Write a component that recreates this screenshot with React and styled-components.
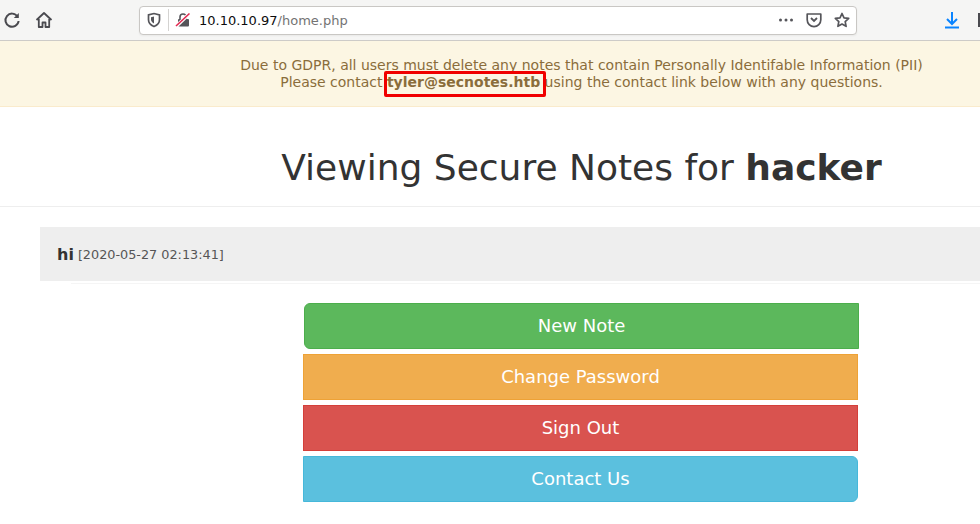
import React from "react";
import styled, { createGlobalStyle } from "styled-components";

const Global = createGlobalStyle`
  html, body { margin: 0; padding: 0; background: #fff; }
  body { font-family: "DejaVu Sans", sans-serif; width: 980px; height: 524px; overflow: hidden; }
`;
const Toolbar = styled.div`
  height: 40px; background: #f5f5f4; border-bottom: 1px solid #cdcbc8;
  display: flex; align-items: center; position: relative; overflow: hidden;
`;
const NavIcon = styled.svg`
  width: 18px; height: 18px; flex: none; color: #4a4a4f; margin-left: ${p => p.$ml}px;
`;
const UrlBar = styled.div`
  margin-left: 86px; width: 718px; flex: none; height: 29px; box-sizing: border-box; background: #fff;
  border: 1px solid #c9c7c4; border-radius: 4px; display: flex; align-items: center;
  box-shadow: 0 1px 2px rgba(0,0,0,.05);
`;
const BarIcon = styled.svg`
  flex: none; width: ${p => p.$w || 16}px; height: 16px; margin-left: ${p => p.$ml}px; color: #55555a;
`;
const Sep = styled.div`width: 1px; height: 22px; background: #d4d3d1; margin-left: 6px;`;
const Url = styled.div`
  font-size: 13px; margin-left: 8px; color: #0c0c0d; flex: 1; white-space: nowrap;
  span { color: #737373; }
`;
const Banner = styled.div`
  height: 66px; box-sizing: border-box; background: #fcf6e3; border-bottom: 1px solid #faebcc;
  padding: 16px 0 0 183px; color: #8a6d3b; font-size: 14px; line-height: 17px; text-align: center;
  position: relative;
  b { font-weight: 700; }
`;
const Highlight = styled.div`
  position: absolute; left: 384px; top: 30px; width: 162px; height: 26px; box-sizing: border-box;
  border: 3px solid #f00000; border-radius: 2px;
`;
const Header = styled.div`
  height: 100px; box-sizing: border-box; border-bottom: 1px solid #eee; padding: 39px 0 0 183px;
  text-align: center; font-size: 36px; line-height: 44px; color: #333;
  b { font-weight: 700; }
`;
const NoteWrap = styled.div`
  margin-top: 20px; margin-left: 40px;
`;
const Note = styled.div`
  height: 54px; box-sizing: border-box; background: #eee; padding-left: 18px;
  display: flex; align-items: center; gap: 4px; color: #333;
`;
const NoteTitle = styled.span`font-size: 16px; font-weight: 700; margin-left: -1px;`;
const NoteDate = styled.span`font-size: 12.8px; color: #555; padding-top: 1px;`;
const Rule = styled.div`
  margin: 2px 0 0 31px; height: 1px; background: #f5f5f5;
`;
const Buttons = styled.div`
  margin: 19px 0 0 303px; width: 556px; display: flex; flex-direction: column; gap: 5px;
`;
const Btn = styled.button`
  height: 46px; box-sizing: border-box; padding: 0; font: 18px/1 "DejaVu Sans", sans-serif; color: #fff;
  background: ${p => p.$bg}; border: 1px solid ${p => p.$bd};
  border-radius: ${p => p.$radius};
  margin-left: ${p => p.$ml || 0}px; margin-right: ${p => p.$mr || 0}px;
`;

export default function App() {
  return (
    <>
      <Global />
      <Toolbar>
        <NavIcon $ml={3} viewBox="0 0 18 18" fill="none" stroke="currentColor" strokeWidth="2">
          <path d="M14.5 5.5A6.6 6.6 0 1 0 15.6 10" />
          <path d="M15.8 2v5h-5z" fill="currentColor" stroke="none" />
        </NavIcon>
        <NavIcon $ml={14} viewBox="0 0 18 18" fill="none" stroke="currentColor" strokeWidth="1.8" strokeLinejoin="round">
          <path d="M1.500 9 9 2l7.500 7" />
          <path d="M3.800 8v8h3.700v-4.500h3V16h3.700V8" />
        </NavIcon>
        <UrlBar>
          <BarIcon $ml={6} viewBox="0 0 16 16" fill="none" stroke="currentColor" strokeWidth="1.700">
            <path d="M2.500 2.800 8 1.500l5.500 1.300v5c0 3.200-2.300 5.500-5.500 6.700C4.800 13.300 2.500 11 2.500 7.800z" />
            <path d="M8 4.500 5 5.300v2.500c0 1.500 1.200 2.800 3 3.600z" fill="currentColor" stroke="none" />
          </BarIcon>
          <Sep />
          <BarIcon $ml={6} viewBox="0 0 16 16">
            <path d="M5 7V5a3 3 0 0 1 6 0v2" fill="none" stroke="#55555a" strokeWidth="1.600" />
            <rect x="3" y="7" width="11" height="7.500" rx="1" fill="#55555a" />
            <path d="M1 14.500 14.500 1.500" stroke="#fff" strokeWidth="3.500" />
            <path d="M1 14 14.500 1.500" stroke="#e22850" strokeWidth="1.600" />
          </BarIcon>
          <Url>10.10.10.97<span>/home.php</span></Url>
          <BarIcon $w={16} viewBox="0 0 16 16" fill="currentColor">
            <circle cx="2.500" cy="8" r="1.500" /><circle cx="8" cy="8" r="1.500" /><circle cx="13.500" cy="8" r="1.500" />
          </BarIcon>
          <BarIcon $ml={12} viewBox="0 0 16 16" fill="none" stroke="currentColor" strokeWidth="1.700">
            <path d="M1.200 2h13.600v5.800a6.800 6.800 0 0 1-13.600 0z" strokeLinejoin="round" />
            <path d="m5 6 3 3 3-3" strokeWidth="1.800" />
          </BarIcon>
          <BarIcon $ml={12} viewBox="0 0 16 16" fill="none" stroke="currentColor" strokeWidth="1.700" style={{ marginRight: 6 }}>
            <path d="m8 1.500 2 4.300 4.700.6-3.500 3.200.9 4.700L8 12l-4.100 2.300.9-4.700L1.300 6.400 6 5.800z" strokeLinejoin="round" />
          </BarIcon>
        </UrlBar>
        <NavIcon $ml={86} viewBox="0 0 18 18" fill="none" stroke="#0a84ff" strokeWidth="2">
          <path d="M9 1v11M4 8l5 5 5-5" />
          <path d="M2 16.500h14" />
        </NavIcon>
        <NavIcon $ml={16} viewBox="0 0 18 18" fill="none" stroke="#4a4a4f" strokeWidth="2">
          <path d="M2 2v14" />
        </NavIcon>
      </Toolbar>
      <Banner>
        Due to GDPR, all users must delete any notes that contain Personally Identifable Information (PII)<br />
        Please contact <b>tyler@secnotes.htb</b> using the contact link below with any questions.
        <Highlight />
      </Banner>
      <Header>Viewing Secure Notes for <b>hacker</b></Header>
      <NoteWrap>
        <Note>
          <NoteTitle>hi</NoteTitle>
          <NoteDate>[2020-05-27 02:13:41]</NoteDate>
        </Note>
        <Rule />
      </NoteWrap>
      <Buttons>
        <Btn $bg="#5cb85c" $bd="#4cae4c" $radius="6px 0 0 6px" $ml={1}>New Note</Btn>
        <Btn $bg="#f0ad4e" $bd="#eea236" $radius="0" $mr={1}>Change Password</Btn>
        <Btn $bg="#d9534f" $bd="#d43f3a" $radius="0" $mr={1}>Sign Out</Btn>
        <Btn $bg="#5bc0de" $bd="#46b8da" $radius="0 6px 6px 0" $mr={1}>Contact Us</Btn>
      </Buttons>
    </>
  );
}
